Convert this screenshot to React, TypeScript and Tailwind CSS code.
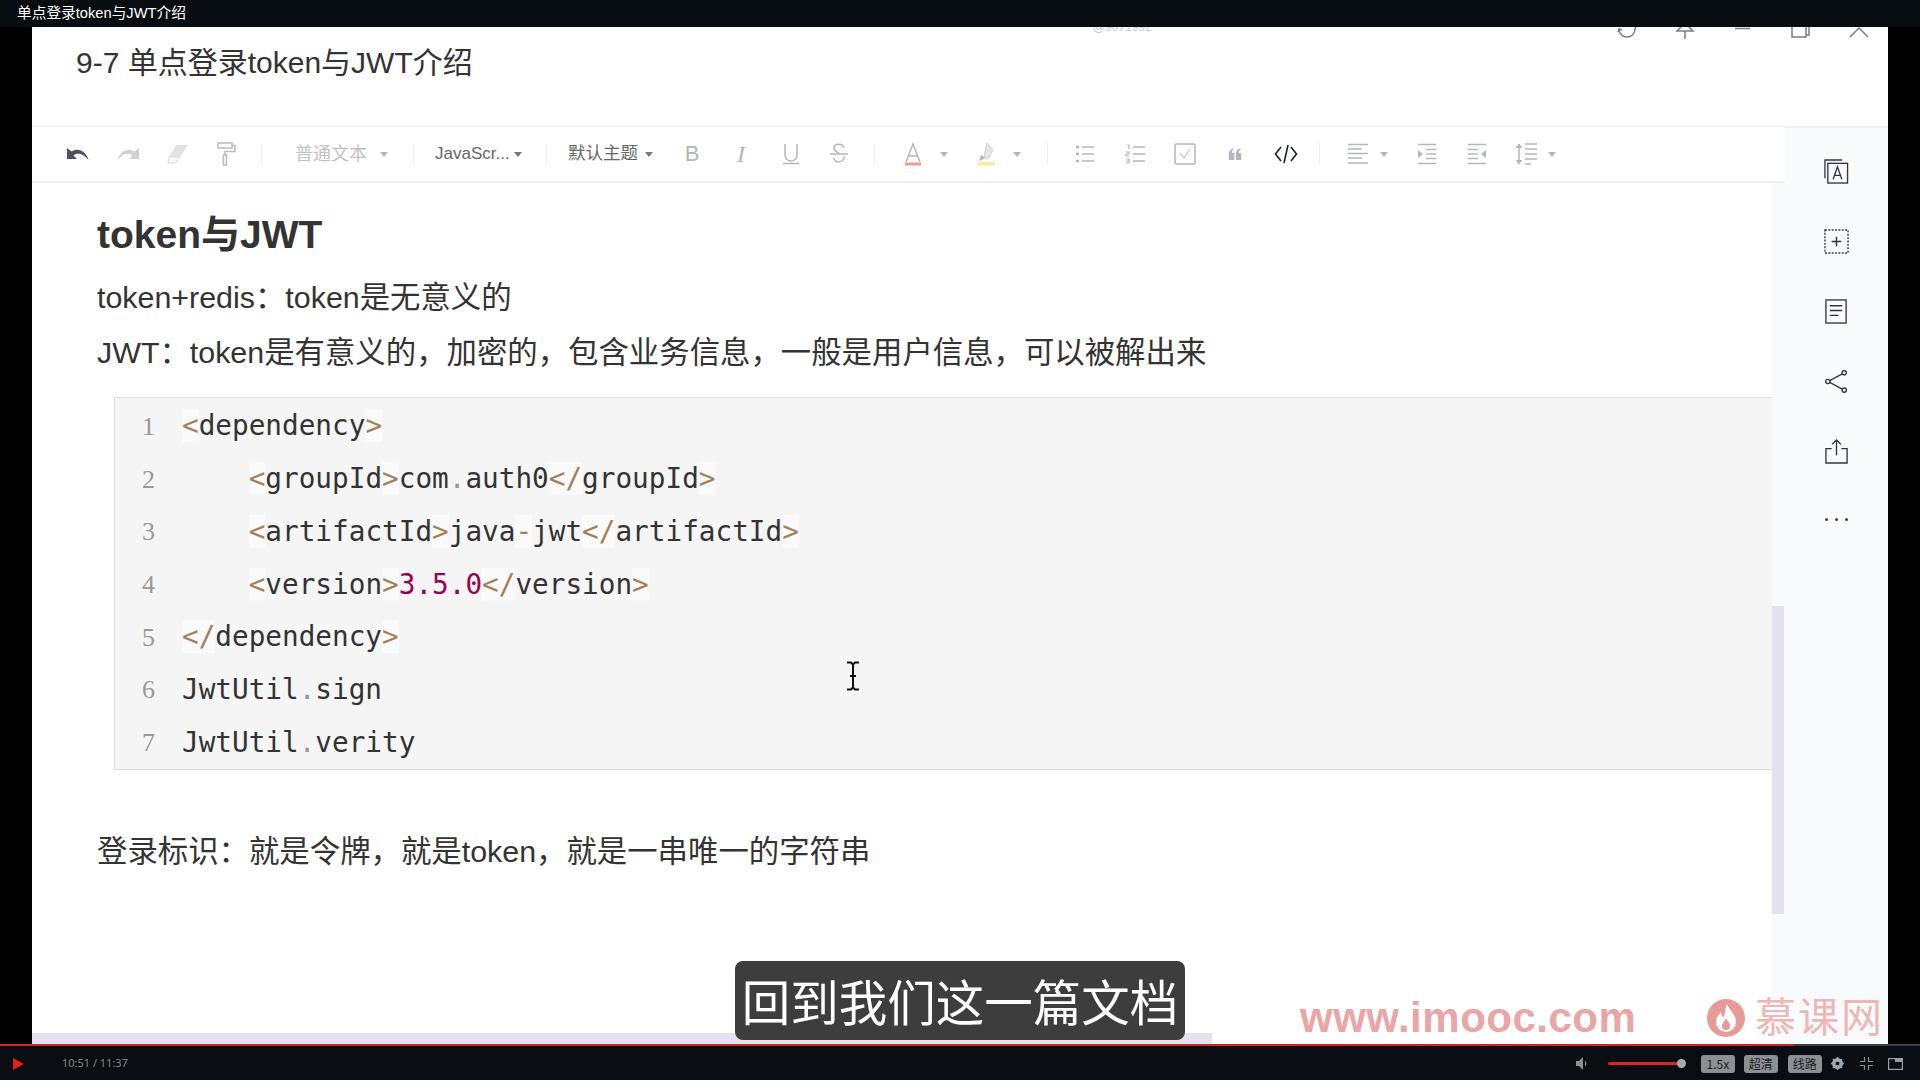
import React from "react";

const cjk = "font-['Liberation_Sans','Noto_Sans_CJK_SC',sans-serif]";

function Sep({ className }: { className: string }) {
  return <div className={`w-px h-[22px] bg-[#eeeeee] shrink-0 ${className}`} />;
}
function Caret({ className, color = "border-t-[#b5b5b5]" }: { className: string; color?: string }) {
  return (
    <div className={`w-[10px] shrink-0 flex justify-center ${className}`}>
      <div className={`w-0 h-0 border-l-[4px] border-r-[4px] border-t-[5px] border-l-transparent border-r-transparent ${color}`} />
    </div>
  );
}
function Cell({ className, children }: { className: string; children: React.ReactNode }) {
  return <div className={`w-[40px] h-[28px] shrink-0 flex items-center justify-center ${className}`}>{children}</div>;
}

const G = "#b4b7bd";

function Toolbar() {
  return (
    <div className={`h-[56px] pl-[26px] flex items-center bg-white border-b-2 border-[#f0f0f0] ${cjk}`}>
      <Cell className="">
        <svg width="24" height="16" viewBox="0 0 24 16"><path d="M1 2v11h10L7.500 9.500C11 6.500 17 7 22.500 14 20 5 12 1 5.500 5.500z" fill="#4c5262" /></svg>
      </Cell>
      <Cell className="ml-[10px]">
        <svg width="24" height="16" viewBox="0 0 24 16"><path d="M23 2v11H13l3.500-3.500C13 6.500 7 7 1.500 14 4 5 12 1 18.500 5.500z" fill="#cfd0d3" /></svg>
      </Cell>
      <Cell className="ml-[10px]">
        <svg width="22" height="20" viewBox="0 0 22 20"><path d="M9 1h12l-8 12H2z" fill="#e2e2e2" /><path d="M2 13h11l-4 6H1z" fill="#f6f6f6" stroke="#dddddd" /></svg>
      </Cell>
      <Cell className="ml-[8px]">
        <svg width="20" height="24" viewBox="0 0 20 24" fill="none" stroke="#b9bbc0" strokeWidth="1.500"><rect x="2" y="1" width="14" height="5" /><path d="M16 3.500h3v6H9v3" /><rect x="7.500" y="13" width="3" height="10" /></svg>
      </Cell>
      <Sep className="ml-[15px]" />
      <span className="ml-[33px] w-[72px] shrink-0 text-[18px] leading-none text-[#c2c2c2] whitespace-nowrap">普通文本</span>
      <Caret className="ml-[12px]" />
      <Sep className="ml-[24px]" />
      <span className="ml-[21px] w-[73px] shrink-0 text-[17px] leading-none text-[#666666] whitespace-nowrap -mt-[2px]">JavaScr...</span>
      <Caret className="ml-[5px]" color="border-t-[#777777]" />
      <Sep className="ml-[23px]" />
      <span className="ml-[21px] w-[70px] shrink-0 text-[17.500px] leading-none text-[#666666] whitespace-nowrap">默认主题</span>
      <Caret className="ml-[6px]" color="border-t-[#777777]" />
      <Cell className="ml-[18px]">
        <span className="font-['Liberation_Sans'] text-[22px] leading-none text-[#b4b7bd]">B</span>
      </Cell>
      <Cell className="ml-[9px]">
        <span className="font-['Liberation_Serif'] italic text-[24px] leading-none text-[#b4b7bd]">I</span>
      </Cell>
      <Cell className="ml-[10px]">
        <svg width="20" height="22" viewBox="0 0 20 22" fill="none" stroke={G} strokeWidth="1.500"><path d="M4 1v11a6 6 0 0 0 12 0V1" /><path d="M2 20.500h16" /></svg>
      </Cell>
      <Cell className="ml-[8px]">
        <svg width="20" height="22" viewBox="0 0 20 22" fill="none" stroke={G} strokeWidth="1.500"><path d="M15 5c-1-5-10-5-10 0 0 3 3 4 5 5m5 3c1 7-10 8-10 2" /><path d="M1 11h18" /></svg>
      </Cell>
      <Sep className="ml-[15px]" />
      <Cell className="ml-[18px]">
        <svg width="18" height="24" viewBox="0 0 18 24" fill="none"><path d="M2 20L9 2l7 18M4.500 14h9" stroke={G} strokeWidth="1.500" /><rect x="1" y="20.500" width="16" height="3" fill="#e8a08f" /></svg>
      </Cell>
      <Caret className="ml-[6px]" />
      <Cell className="ml-[18px]">
        <svg width="18" height="24" viewBox="0 0 18 24"><path d="M9 1l6 7-5 9-4-3z" fill="#e6e6e8" stroke="#cfd0d3" /><path d="M1 19l2-6 5 3z" fill="#b4b7bd" /><rect x="0" y="20" width="17" height="3.500" fill="#f8ee9a" /></svg>
      </Cell>
      <Caret className="ml-[5px]" />
      <Sep className="ml-[25px]" />
      <Cell className="ml-[17px]">
        <svg width="20" height="20" viewBox="0 0 20 20" stroke={G} strokeWidth="1.500" fill="none"><path d="M7 3h12M7 10h12M7 17h12" /><path d="M1 3h3M1 10h3M1 17h3" strokeWidth="2.500" /></svg>
      </Cell>
      <Cell className="ml-[10px]">
        <svg width="20" height="20" viewBox="0 0 20 20" stroke={G} strokeWidth="1.500" fill="none"><path d="M8 3h12M8 10h12M8 17h12" /><path d="M2 1h2v4M1 8h3v2H1v2h3M1 15h3v4H1M1 17h3" strokeWidth="1.200" /></svg>
      </Cell>
      <Cell className="ml-[10px]">
        <svg width="22" height="22" viewBox="0 0 22 22" fill="none" stroke={G} strokeWidth="1.500"><rect x="1" y="1" width="20" height="20" rx="1.500" /><path d="M6 10l4 5 6-9" strokeWidth="1" /></svg>
      </Cell>
      <Cell className="ml-[10px]">
        <svg width="14" height="13" viewBox="0 0 18 16" fill={G}><path d="M1 7C1 4 3 1 7 0v2C5.500 2.500 5 4 5 6h3v9H1zM10 7c0-3 2-6 6-7v2c-1.500.5-2 2-2 4h3v9h-7z" /></svg>
      </Cell>
      <Cell className="ml-[11px]">
        <svg width="24" height="20" viewBox="0 0 24 20" fill="none" stroke="#1d2129" strokeWidth="1.600"><path d="M7 3L1.500 10 7 17M17 3l5.500 7L17 17M14 1l-4 18" /></svg>
      </Cell>
      <Sep className="ml-[13px]" />
      <Cell className="ml-[18px]">
        <svg width="20" height="22" viewBox="0 0 20 22" stroke={G} strokeWidth="1.500"><path d="M0 1.500h20M0 6h14M0 10.500h20M0 15h14M0 20h20" /></svg>
      </Cell>
      <Caret className="ml-[1px]" />
      <Cell className="ml-[18px]">
        <svg width="20" height="22" viewBox="0 0 20 22" stroke={G} strokeWidth="1.500" fill="none"><path d="M1 1.500h18M9 6.500h10M9 11h10M9 15.500h10M1 20.500h18" /><path d="M1 7l5 4-5 4z" fill={G} stroke="none" /></svg>
      </Cell>
      <Cell className="ml-[10px]">
        <svg width="20" height="22" viewBox="0 0 20 22" stroke={G} strokeWidth="1.500" fill="none"><path d="M1 1.500h18M1 6.500h10M1 11h10M1 15.500h10M1 20.500h18" /><path d="M19 7l-5 4 5 4z" fill={G} stroke="none" /></svg>
      </Cell>
      <Cell className="ml-[9px]">
        <svg width="24" height="24" viewBox="0 0 24 24" stroke={G} strokeWidth="1.500" fill="none"><path d="M5 2v20" /><path d="M1.500 6L5 1.500 8.500 6zM1.500 18L5 22.500 8.500 18z" fill={G} stroke="none" /><path d="M11 2h12M11 7h12M11 12h12M11 17h12M11 22h6" /></svg>
      </Cell>
      <Caret className="ml-[1px]" />
    </div>
  );
}

const B = ({ children }: { children: React.ReactNode }) => <span className="text-[#a67f59] bg-white/50">{children}</span>;
const T = ({ children }: { children: React.ReactNode }) => <span className="text-[#333333]">{children}</span>;
const D = () => <span className="text-[#999999]">.</span>;

function CodeBlock() {
  const lines: React.ReactNode[] = [
    <><B>&lt;</B><T>dependency</T><B>&gt;</B></>,
    <>{"    "}<B>&lt;</B><T>groupId</T><B>&gt;</B><T>com</T><D /><T>auth0</T><B>&lt;/</B><T>groupId</T><B>&gt;</B></>,
    <>{"    "}<B>&lt;</B><T>artifactId</T><B>&gt;</B><T>java</T><B>-</B><T>jwt</T><B>&lt;/</B><T>artifactId</T><B>&gt;</B></>,
    <>{"    "}<B>&lt;</B><T>version</T><B>&gt;</B><span className="text-[#990055]">3.5.0</span><B>&lt;/</B><T>version</T><B>&gt;</B></>,
    <><B>&lt;/</B><T>dependency</T><B>&gt;</B></>,
    <><T>JwtUtil</T><D /><T>sign</T></>,
    <><T>JwtUtil</T><D /><T>verity</T></>,
  ];
  return (
    <div className="ml-[82px] mt-[17px] h-[373px] bg-[#f5f5f5] border border-r-0 border-[#dddddd] pt-[2px]">
      {lines.map((l, i) => (
        <div key={i} className="flex h-[52.700px] items-center">
          <span className="w-[67px] shrink-0 pl-[27px] font-['Liberation_Serif',serif] text-[26px] text-[#999999]">{i + 1}</span>
          <pre className="font-['DejaVu_Sans_Mono',monospace] text-[27.700px] leading-none whitespace-pre">{l}</pre>
        </div>
      ))}
    </div>
  );
}

function Body() {
  return (
    <div className={`flex h-[850px] ${cjk}`}>
      <div className="relative w-[1740px] bg-white text-[#333333]">
        <h1 className="ml-[65px] pt-[24px] h-[87px] text-[39px] leading-[56px] font-bold">token与JWT</h1>
        <p className="ml-[65px] h-[55px] text-[30.400px] leading-[55px]">token+redis：token是无意义的</p>
        <p className="ml-[65px] h-[55px] text-[30.400px] leading-[55px]">JWT：token是有意义的，加密的，包含业务信息，一般是用户信息，可以被解出来</p>
        <CodeBlock />
        <p className="ml-[65px] mt-[54px] h-[55px] text-[30.400px] leading-[55px]">登录标识：就是令牌，就是token，就是一串唯一的字符串</p>
        <svg className="absolute left-[813px] top-[478px]" width="16" height="30" viewBox="0 0 16 30" fill="none" stroke="#111111" strokeWidth="2">
          <path d="M2 1.500h4l2 2 2-2h4M8 3.500v23M2 28.500h4l2-2 2 2h4M5 15h6" />
        </svg>
      </div>
      <div className="w-[13px] bg-[#f9fafb]">
        <div className="mt-[423px] h-[308px] w-[12px] bg-[#e3e3f0]" />
      </div>
    </div>
  );
}

function Sidebar() {
  const I = "#2f374b";
  return (
    <div className="w-[103px] bg-[#f9fafb] border-t border-[#f0f0f0] flex flex-col items-center pt-[31px] gap-[45px]">
      <svg width="25" height="25" viewBox="0 0 26 26" fill="none" stroke={I} strokeWidth="1.400"><path d="M1 20V1h18" /><rect x="4" y="4.500" width="20.500" height="20.500" /><path d="M9.500 21L14 8l4.500 13M11 17h6" /></svg>
      <svg width="25" height="25" viewBox="0 0 26 26" fill="none" stroke={I} strokeWidth="1.500"><rect x="1" y="1" width="24" height="24" strokeDasharray="2 1.500" /><path d="M8 13h10M13 8v10" /></svg>
      <svg width="25" height="25" viewBox="0 0 26 26" fill="none" stroke={I} strokeWidth="1.400"><rect x="2" y="1" width="21" height="24" /><path d="M6 7h13M6 12h13M6 17h9" /></svg>
      <svg width="25" height="25" viewBox="0 0 26 26" fill="none" stroke={I} strokeWidth="1.400"><circle cx="21" cy="4" r="2.200" /><circle cx="4" cy="13" r="2.200" /><circle cx="21" cy="22" r="2.200" /><path d="M19 5L6 12M6 14l13 7" /></svg>
      <svg width="25" height="25" viewBox="0 0 26 26" fill="none" stroke={I} strokeWidth="1.400"><path d="M8 10H2v15h22V10h-6M13 17V1M8.500 5.500L13 1l4.500 4.500" /></svg>
      <div className="flex gap-[7px] mt-[-36px] pt-[45px]">
        <div className="w-[3px] h-[3px] bg-[#3b4358] rounded-full" />
        <div className="w-[3px] h-[3px] bg-[#3b4358] rounded-full" />
        <div className="w-[3px] h-[3px] bg-[#3b4358] rounded-full" />
      </div>
    </div>
  );
}

function WindowIcons() {
  const c = "#787d86";
  return (
    <div className="flex mr-[19px] gap-[38px]">
      <svg width="20" height="14" viewBox="0 0 20 14" fill="none" stroke={c} strokeWidth="1.500"><path d="M18 2a8 8 0 0 1-16 0" /><path d="M1 5l1-3 3 1M19 -1l-1 3" /></svg>
      <svg width="20" height="14" viewBox="0 0 20 14" fill="none" stroke={c} strokeWidth="1.500"><path d="M6 -1v1l-4 4h16l-4-4v-1M10 4v8" /></svg>
      <svg width="20" height="14" viewBox="0 0 20 14" fill="none" stroke={c} strokeWidth="1.500"><path d="M2 1.500h15" /></svg>
      <svg width="20" height="14" viewBox="0 0 20 14" fill="none" stroke={c} strokeWidth="1.500"><path d="M1 0v10h14V0M15 8h3V0" /></svg>
      <svg width="20" height="14" viewBox="0 0 20 14" fill="none" stroke={c} strokeWidth="1.500"><path d="M1 10l9-9 9 9" /></svg>
    </div>
  );
}

function PlayerBar() {
  const badge = "h-[18px] rounded-[3px] bg-[#8c8f93] flex items-center justify-center text-[#1c1e22] text-[12px] leading-none w-[34px] shrink-0 font-['Noto_Sans_CJK_SC',sans-serif]";
  return (
    <div className="h-[36px] bg-[#0a0d11] flex flex-col">
      <div className="flex h-[2px] shrink-0">
        <div className="w-[1794px] bg-[#d0242b]" />
        <div className="flex-1 bg-[#3c4045]" />
      </div>
      <div className="flex-1 flex items-center pl-[13px] pt-[1px]">
        <div className="w-0 h-0 border-t-[6.500px] border-b-[6.500px] border-l-[11px] border-t-transparent border-b-transparent border-l-[#e8200c]" />
        <span className="ml-[38px] font-['Open_Sans',sans-serif] text-[11px] text-[#8b9096] whitespace-nowrap">10:51 / 11:37</span>
        <svg className="ml-[1448px]" width="13" height="13" viewBox="0 0 13 13" fill="#8b8e92"><path d="M0 4h3l4-4v13l-4-4H0z" /><path d="M9 3.500a4 4 0 0 1 0 6z" /></svg>
        <div className="ml-[19px] w-[74px] h-[3px] bg-[#e2202a] rounded-full relative">
          <div className="absolute right-[-4px] top-[-3px] w-[9px] h-[9px] rounded-full bg-[#a8acb2]" />
        </div>
        <div className={`ml-[19px] ${badge}`}>1.5x</div>
        <div className={`ml-[9px] ${badge}`}>超清</div>
        <div className={`ml-[10px] ${badge}`}>线路</div>
        <svg className="ml-[9px]" width="13" height="13" viewBox="0 0 13 13"><circle cx="6.500" cy="6.500" r="4" fill="none" stroke="#9ea8b5" strokeWidth="3" /><path d="M6.500 0v13M0 6.500h13M2 2l9 9M11 2l-9 9" stroke="#9ea8b5" strokeWidth="1.600" /><circle cx="6.500" cy="6.500" r="1.800" fill="#0a0d11" /></svg>
        <svg className="ml-[16px]" width="13" height="13" viewBox="0 0 13 13" fill="none" stroke="#8b8e92" strokeWidth="1.200"><path d="M4.500 0v4.500H0M8.500 0v4.500H13M4.500 13V8.500H0M8.500 13V8.500H13" /></svg>
        <svg className="ml-[15px]" width="15" height="12" viewBox="0 0 15 12" fill="none"><rect x=".6" y=".6" width="13.800" height="10.800" stroke="#9ca0a5" strokeWidth="1.200" /><rect x="7" y="1" width="7" height="3" fill="#9ca0a5" /></svg>
      </div>
    </div>
  );
}

export default function App() {
  return (
    <div className="w-[1920px] h-[1080px] bg-black flex flex-col overflow-hidden relative">
      <div className={`h-[27px] shrink-0 bg-[#080d12] pl-[17px] pb-[1px] flex items-center text-white text-[14.700px] leading-none ${cjk}`}>
        单点登录token与JWT介绍
      </div>
      <div className="flex-1 min-h-0 flex px-[32px]">
        <div className="flex-1 flex flex-col bg-white overflow-hidden relative">
          <div className={`h-[100px] shrink-0 flex justify-between items-start pl-[44px] border-b border-[#f0f0f0] ${cjk}`}>
            <div className="mt-[15px] text-[30px] leading-[42px] text-[#333333] whitespace-nowrap">9-7 单点登录token与JWT介绍</div>
            <WindowIcons />
          </div>
          <div className="flex-1 min-h-0 flex">
            <div className="w-[1753px] flex flex-col">
              <Toolbar />
              <Body />
              <div className="flex-1 bg-white">
                <div className="w-[1180px] h-full bg-[#e3e3f0]" />
              </div>
            </div>
            <Sidebar />
          </div>
          <span className="absolute left-[1061px] -top-[6px] text-[12px] leading-none text-[#c8c8c8] font-['Liberation_Sans',sans-serif]">@9071992</span>
        </div>
      </div>
      <PlayerBar />
      <div className={`absolute left-[735px] top-[961px] w-[450px] h-[79px] pt-[7px] rounded-[8px] bg-[#3d3d3d] flex items-center justify-center text-white text-[48.500px] leading-none ${cjk}`}>
        回到我们这一篇文档
      </div>
      <div className="absolute left-[1300px] top-[995px] flex items-center">
        <span className="w-[407px] font-['Liberation_Sans',sans-serif] font-bold text-[42px] leading-[46px] text-[#e8a6a6] tracking-[0.500px] whitespace-nowrap">www.imooc.com</span>
        <svg width="38" height="40" viewBox="0 0 38 40"><circle cx="19" cy="20" r="19" fill="#e89a98" /><path d="M20 6c2 6 9 10 9 18a10 10 0 0 1-20 0c0-5 3-7 5-10 0 3 1 5 3 5 1-4 1-8 3-13z" fill="#ffffff" /><path d="M19 20c1 3 4 4 4 8a4 4 0 0 1-8 0c0-3 3-5 4-8z" fill="#e89a98" /></svg>
        <span className={`ml-[10px] text-[41px] leading-[46px] text-[#edb7b6] tracking-[2px] whitespace-nowrap ${cjk}`}>慕课网</span>
      </div>
    </div>
  );
}
